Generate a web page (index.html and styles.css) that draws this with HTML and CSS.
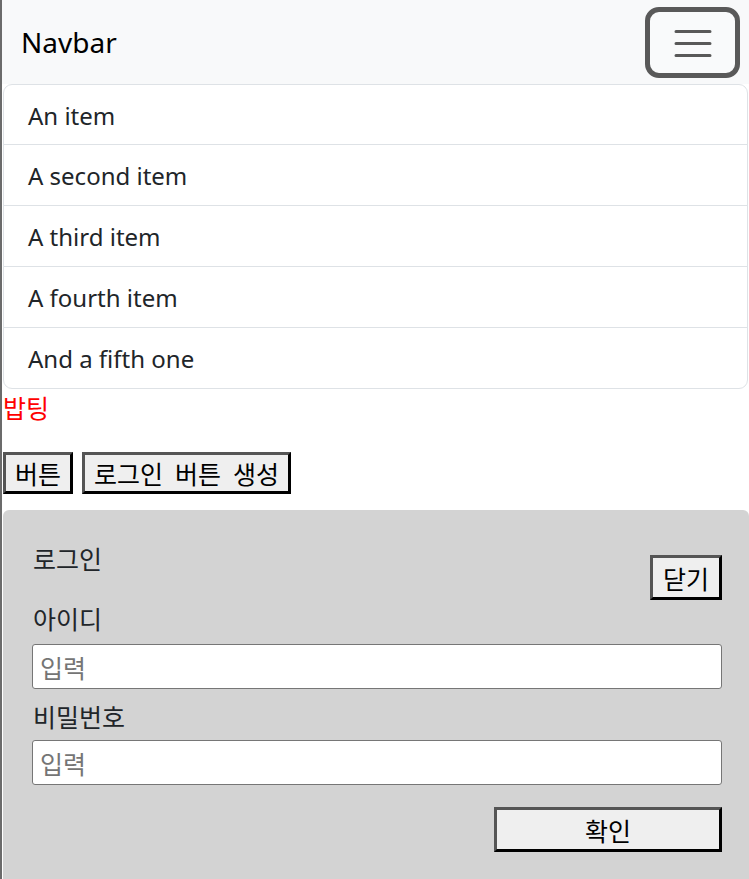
FILE: index.html
```html
<!DOCTYPE html>
<html lang="ko">
<head>
<meta charset="utf-8">
<title>Navbar</title>
<link rel="stylesheet" href="styles.css">
</head>
<body>
<nav class="navbar">
  <span class="brand">Navbar</span>
  <button class="toggler" type="button" aria-label="Toggle navigation">
    <svg class="toggler-icon" width="38" height="30" viewBox="0 0 38 30">
      <path d="M2 3.5H36M2 15.5H36M2 27.5H36" stroke="#595959" stroke-width="3" stroke-linecap="round" fill="none"/>
    </svg>
  </button>
</nav>
<main class="content">
  <ul class="list-group">
    <li class="list-item">An item</li>
    <li class="list-item">A second item</li>
    <li class="list-item">A third item</li>
    <li class="list-item">A fourth item</li>
    <li class="list-item">And a fifth one</li>
  </ul>
  <p class="red-text">밥팅</p>
  <div class="btn-row">
    <button class="btn" type="button">버튼</button>
    <button class="btn" type="button">로그인 버튼 생성</button>
  </div>
  <section class="panel">
    <div class="panel-head">
      <h2 class="panel-title">로그인</h2>
      <button class="btn btn-close" type="button">닫기</button>
    </div>
    <label class="field-label" for="uid">아이디</label>
    <input class="field" id="uid" type="text" placeholder="입력">
    <label class="field-label field-label-2" for="pw">비밀번호</label>
    <input class="field field-2" id="pw" type="password" placeholder="입력">
    <div class="actions">
      <button class="btn btn-submit" type="button">확인</button>
    </div>
  </section>
</main>
</body>
</html>
```

FILE: styles.css
```css
html, body {
  margin: 0;
  padding: 0;
}

body {
  border-left: 2px solid #6b6b6b;
  min-height: 879px;
  box-sizing: border-box;
  font-family: "Noto Sans", "Noto Sans CJK KR", sans-serif;
  font-size: 24px;
  line-height: 1.5;
  color: #212529;
  background: #fff;
  overflow: hidden;
}

.navbar {
  height: 84px;
  background: #f8f9fa;
  display: flex;
  align-items: center;
  justify-content: space-between;
  padding: 0 9px 0 19px;
  box-sizing: border-box;
}

.brand {
  font-size: 28px;
  line-height: 36px;
  color: #000;
}

.toggler {
  width: 95px;
  height: 71px;
  box-sizing: border-box;
  border: 5px solid #595959;
  border-radius: 14px;
  background: #f9fafb;
  display: flex;
  align-items: center;
  justify-content: center;
  padding: 0;
  margin-top: 1px;
}

.toggler-icon {
  display: block;
}

.content {
  margin-left: 1px;
}

.list-group {
  list-style: none;
  margin: 0 1px 0 0;
  padding: 0;
  border: 1px solid #dee2e6;
  border-radius: 9px;
  overflow: hidden;
}

.list-item {
  height: 61px;
  box-sizing: border-box;
  padding: 2px 25px 0 24px;
  display: flex;
  align-items: center;
  border-bottom: 1px solid #dee2e6;
  font-size: 24px;
  color: #212529;
}

.list-item:first-child {
  height: 60px;
}

.list-item:last-child {
  border-bottom: none;
  height: 60px;
}

.red-text {
  margin: 0;
  font-family: "Noto Sans CJK KR", sans-serif;
  font-size: 25px;
  line-height: 36px;
  color: #ff0000;
}

.btn-row {
  display: flex;
  gap: 9px;
  margin-top: 27px;
}

.btn {
  font-family: "Noto Sans CJK KR", sans-serif;
  font-size: 25px;
  line-height: 36px;
  word-spacing: 5px;
  color: #000;
  background: #efefef;
  border-style: solid;
  border-width: 3px;
  border-color: #555 #000 #000 #555;
  padding: 0 9px;
  margin: 0;
}

.panel {
  margin-top: 16px;
  background: #d3d3d3;
  border-radius: 6px 6px 0 0;
  padding: 30px 27px 40px 29px;
  font-family: "Noto Sans CJK KR", sans-serif;
  font-size: 25px;
  line-height: 36px;
  color: #212529;
}

.panel-head {
  display: flex;
  justify-content: space-between;
  align-items: flex-start;
}

.panel-title {
  margin: 0;
  font-size: 25px;
  font-weight: normal;
  line-height: 36px;
  padding-left: 1px;
}

.btn-close {
  margin-top: 15px;
  padding: 2px 10px 1px 10px;
}

.field-label {
  display: block;
  padding-left: 1px;
}

.field {
  display: block;
  width: 100%;
  height: 45px;
  box-sizing: border-box;
  margin-top: 8px;
  border: 1px solid #767676;
  border-radius: 3px;
  background: #fff;
  padding: 0 7px;
  font-family: "Noto Sans CJK KR", sans-serif;
  font-size: 25px;
  color: #000;
}

.field::placeholder {
  color: #757575;
}

.field-label-2 {
  margin-top: 9px;
}

.field-2 {
  margin-top: 6px;
}

.actions {
  display: flex;
  justify-content: flex-end;
  margin-top: 22px;
}

.btn-submit {
  width: 228px;
  height: 45px;
  padding: 0;
}
```
